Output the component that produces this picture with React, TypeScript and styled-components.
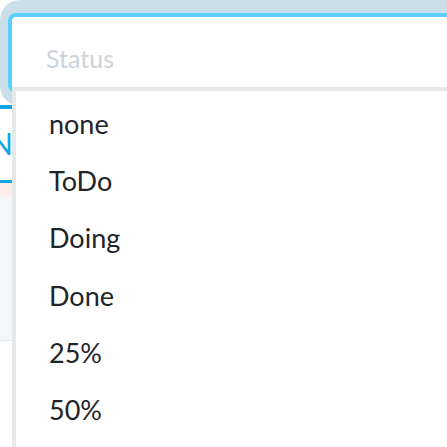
import React from "react";
import styled, { createGlobalStyle } from "styled-components";

const Global = createGlobalStyle`
  html, body { margin: 0; padding: 0; background: #ffffff; }
  body { font-family: Lato, "Open Sans", sans-serif; }
  #root { width: 447px; height: 447px; }
`;

const Page = styled.div`
  position: relative;
  width: 447px;
  height: 447px;
  overflow: hidden;
  background: #ffffff;
`;

/* the page behind the popup, only its left edge shows */
const Underlay = styled.div`
  display: flex;
  flex-direction: column;
  width: 100%;
  height: 100%;
`;

const Spacer = styled.div<{ $h: number }>`
  height: ${(p) => p.$h}px;
  flex: none;
`;

const Rule = styled.div<{ $h: number; $color: string }>`
  height: ${(p) => p.$h}px;
  background: ${(p) => p.$color};
  flex: none;
`;

const BrandRow = styled.div`
  height: 71px;
  flex: none;
  display: flex;
  align-items: flex-start;
  padding-top: 16px;
  box-sizing: border-box;
`;

const Brand = styled.span`
  margin-left: -10px;
  font-family: Lato, sans-serif;
  font-size: 30px;
  line-height: 36px;
  color: #14a6e3;
  font-weight: 400;
`;

const Panel = styled.div`
  height: 143px;
  flex: none;
  background: #f4f6f9;
  border-bottom: 1px solid #e3e6ea;
`;

const Field = styled.div`
  position: absolute;
  left: 8px;
  top: 13px;
  width: 470px;
  height: 80px;
  box-sizing: border-box;
  border: 4px solid #5ccffd;
  border-radius: 8px;
  background: #ffffff;
  box-shadow: 5px 0 0 13px #cbdfea;
  display: flex;
  align-items: flex-start;
  padding: 26px 0 0 34px;
  z-index: 1;
`;

const Placeholder = styled.span`
  font-family: Lato, sans-serif;
  font-size: 25px;
  line-height: 30px;
  color: #cdd3d9;
`;

const Menu = styled.ul`
  position: absolute;
  left: 12px;
  top: 87px;
  width: 460px;
  height: 380px;
  box-sizing: border-box;
  margin: 0;
  padding: 4px 0 0 33px;
  list-style: none;
  background: #ffffff;
  border-top: 4px solid #e6e9ec;
  border-left: 4px solid #e6e9ec;
  z-index: 2;
`;

const Option = styled.li`
  height: 57.2px;
  line-height: 57.2px;
  font-family: Lato, sans-serif;
  font-size: 27px;
  color: #212428;
  white-space: nowrap;
`;

const options = ["none", "ToDo", "Doing", "Done", "25%", "50%"];

export default function App() {
  return (
    <Page>
      <Global />
      <Underlay>
        <Spacer $h={105} />
        <Rule $h={4} $color="#14a6e3" />
        <BrandRow>
          <Brand>N</Brand>
        </BrandRow>
        <Rule $h={3} $color="#14a6e3" />
        <Rule $h={14} $color="#fdefe8" />
        <Panel />
      </Underlay>
      <Field>
        <Placeholder>Status</Placeholder>
      </Field>
      <Menu>
        {options.map((o) => (
          <Option key={o}>{o}</Option>
        ))}
      </Menu>
    </Page>
  );
}
